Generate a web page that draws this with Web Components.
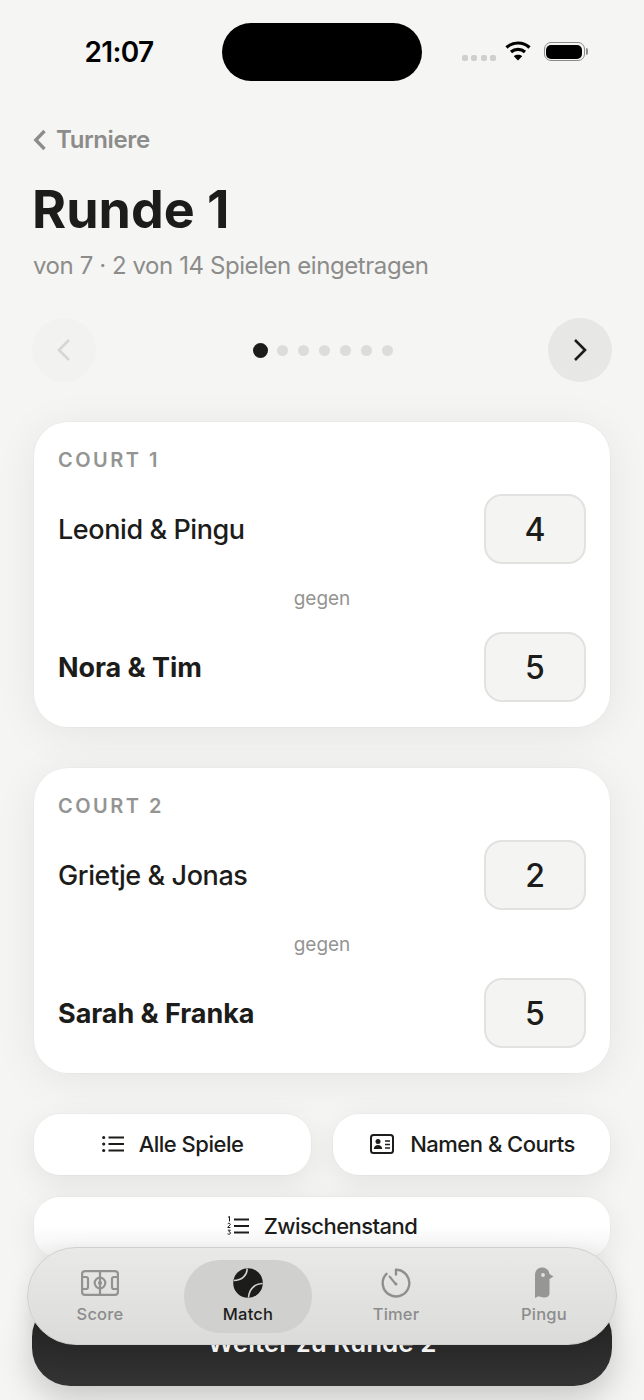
<!DOCTYPE html>
<html lang="de"><head><meta charset="utf-8"><title>Runde 1</title>
<style>
html,body{margin:0;padding:0;height:1400px;overflow:hidden;background:#f5f5f4}
body{font-family:Inter,"Liberation Sans",sans-serif;color:#1c1c1a;width:644px;position:relative}
</style></head><body>
<app-screen>
  <status-bar></status-bar>
  <page-head title="Runde 1" sub="von 7 · 2 von 14 Spielen eingetragen"></page-head>
  <round-nav total="7"></round-nav>
  <court-card label="COURT 1" a="Leonid &amp; Pingu" as="4" b="Nora &amp; Tim" bs="5"></court-card>
  <court-card second label="COURT 2" a="Grietje &amp; Jonas" as="2" b="Sarah &amp; Franka" bs="5"></court-card>
  <action-grid>
    <action-btn icon="list">Alle Spiele</action-btn>
    <action-btn icon="card" nudge>Namen &amp; Courts</action-btn>
    <action-btn icon="num" wide>Zwischenstand</action-btn>
  </action-grid>
  <primary-btn>Weiter zu Runde 2</primary-btn>
</app-screen>
<tab-bar>
  <tab-item icon="pitch">Score</tab-item>
  <tab-item icon="ball" active>Match</tab-item>
  <tab-item icon="timer">Timer</tab-item>
  <tab-item icon="bird">Pingu</tab-item>
</tab-bar>
<script>
const def=(name,html)=>customElements.define(name,class extends HTMLElement{
  connectedCallback(){ if(this.shadowRoot)return; const r=this.attachShadow({mode:'open'}); r.innerHTML=typeof html==='function'?html(this):html; }
});
const ICONS={
 list:`<svg width="22" height="18" viewBox="0 0 22 18" fill="none" stroke="#1c1c1a" stroke-width="2"><path d="M6.500 2.500H22M6.500 9H22M6.500 15.500H22"/><g fill="#1c1c1a" stroke="none"><circle cx="1.700" cy="2.500" r="1.600"/><circle cx="1.700" cy="9" r="1.600"/><circle cx="1.700" cy="15.500" r="1.600"/></g></svg>`,
 card:`<svg width="24" height="20" viewBox="0 0 24 20" fill="none"><rect x="1" y="1" width="22" height="18" rx="2.500" stroke="#1c1c1a" stroke-width="2"/><circle cx="8" cy="7.500" r="2.500" fill="#1c1c1a"/><path d="M3.800 15c.3-3 2-4 4.200-4s3.900 1 4.200 4z" fill="#1c1c1a"/><path d="M15 7h5M15 10.500h5M15 14h5" stroke="#1c1c1a" stroke-width="1.500"/></svg>`,
 num:`<svg width="22" height="20" viewBox="0 0 22 20" fill="none"><path d="M7 3.500H22M7 10H22M7 16.500H22" stroke="#1c1c1a" stroke-width="2"/><path d="M1 1.300 2.500.5V5.500M.7 7.800c.3-.8 2.600-.8 2.600.6 0 1-2.600 2.200-2.600 3.100H3.400M.8 14.200H3.300L1.900 15.800c1.300 0 1.700.6 1.600 1.400-.2 1.200-2.300 1.300-2.900.6" stroke="#1c1c1a" stroke-width="1"/></svg>`,
 pitch:`<svg width="38" height="26" viewBox="0 0 38 26" fill="none" stroke="#929292" stroke-width="2.200"><rect x="1.100" y="1.100" width="35.800" height="23.800" rx="3"/><path d="M19 1.100V24.900"/><circle cx="19" cy="13" r="5.300"/><circle cx="19" cy="13" r="1" fill="#929292"/><path d="M1.100 7H5a2 2 0 0 1 2 2v8a2 2 0 0 1-2 2H1.100M36.900 7H33a2 2 0 0 0-2 2v8a2 2 0 0 0 2 2h3.900"/></svg>`,
 ball:`<svg width="30" height="30" viewBox="0 0 30 30"><circle cx="15" cy="15" r="14.800" fill="#1c1c1a"/><path d="M14 .5C14.500 7 9 12.500 .8 12.500M29.500 15.500C22 15.500 16 21 15.500 29.500" fill="none" stroke="#d2d2d1" stroke-width="1.600"/></svg>`,
 timer:`<svg width="30" height="30" viewBox="0 0 30 30" fill="none" stroke="#8f8f8f" stroke-width="2.400" stroke-linecap="round"><path d="M15 1.800A13.300 13.300 0 1 1 5.500 5.800"/><path d="M15 2V6.500"/><path d="M8.500 8.500 14.300 15.500" stroke-width="2"/><circle cx="15" cy="16" r="1.500" fill="#8f8f8f" stroke="none"/></svg>`,
 bird:`<svg width="20" height="32" viewBox="0 0 20 32"><path d="M1 8C1 3.500 4 .5 8 .5S15 3 15.500 7L19.500 9.500 15.500 12V26C15.500 30 12 31 9 30.500 7 30 5 29.500 4.500 29.300L1 31Z" fill="#969696"/><circle cx="9" cy="8" r="1.900" fill="#e2e2e1"/></svg>`
};
def('app-screen',`<style>:host{display:flex;flex-direction:column;width:644px;height:1400px;overflow:hidden}</style><slot></slot>`);
def('status-bar',`<style>
:host{display:flex;align-items:center;height:58px;margin-top:23px;flex:none}
.t{width:222px;padding-left:16px;box-sizing:border-box;text-align:center;font:600 28px/1 Inter,sans-serif;color:#000;letter-spacing:-.7px}
.pill{width:200px;height:58px;border-radius:29px;background:#000}
.r{flex:1;display:flex;align-items:center;padding-left:40px;box-sizing:border-box}
.dots{display:flex;gap:3.300px;margin-top:12px}.dots i{width:6px;height:6px;border-radius:2px;background:#cfcfcf}
.wifi{margin-left:9px;margin-right:13px;margin-top:-3px}
.bat{display:flex;align-items:center;gap:1px;margin-top:-1px}
.b{width:36px;height:14px;padding:1.500px;border:1.500px solid #8b8b8b;border-radius:7px;box-sizing:content-box}
.b i{display:block;height:100%;background:#000;border-radius:5px}
.n{width:2px;height:7px;background:#8b8b8b;border-radius:0 2px 2px 0}
</style><div class="t">21:07</div><div class="pill"></div><div class="r"><div class="dots"><i></i><i></i><i></i><i></i></div>
<svg class="wifi" width="26" height="21" viewBox="0 0 26 21" fill="none" stroke="#000" stroke-width="3.200"><path d="M1.500 7.500C8 1.500 18 1.500 24.500 7.500"/><path d="M6 12C10 8.500 16 8.500 20 12"/><path d="M13 20.500 8.800 16.200C11 14.300 15 14.300 17.200 16.200Z" fill="#000" stroke="none"/></svg>
<div class="bat"><div class="b"><i></i></div><div class="n"></div></div></div>`);
def('page-head',h=>`<style>
:host{display:block;padding:44px 33px 0;flex:none}
.back{display:flex;align-items:center;gap:9px;font:600 24px/30px Inter,sans-serif;color:#8c8c8a;height:30px;letter-spacing:-.4px}
h1{margin:23px 0 0 -1px;font:700 52px/64px Inter,sans-serif;letter-spacing:0;color:#1c1c1a}
p{margin:9px 0 0;font:400 24px/30px Inter,sans-serif;color:#8c8c8a;letter-spacing:-.42px}
</style><div class="back"><svg width="14" height="22" viewBox="0 0 14 22" fill="none" stroke="#8c8c8a" stroke-width="3.300"><path d="M11.500 2 2.800 11 11.500 20"/></svg><span>Turniere</span></div><h1>${h.getAttribute('title')}</h1><p>${h.getAttribute('sub')}</p>`);
def('round-nav',h=>`<style>
:host{display:flex;align-items:center;justify-content:space-between;padding:0 32px;margin-top:37px;height:64px;flex:none}
.c{width:64px;height:64px;border-radius:50%;display:flex;align-items:center;justify-content:center}
.p{background:#f2f2f1}.n{background:#e7e7e6}
.d{display:flex;align-items:center;gap:10px;margin-left:1px}
.d i{width:11px;height:11px;border-radius:50%;background:#dcdcdb}
.d i:first-child{width:15px;height:15px;background:#1c1c1a;margin-right:-1px}
</style><div class="c p"><svg width="16" height="24" viewBox="0 0 16 24" fill="none" stroke="#d6d6d5" stroke-width="2.600"><path d="M13 2 3 12 13 22"/></svg></div>
<div class="d">${'<i></i>'.repeat(+h.getAttribute('total'))}</div>
<div class="c n"><svg width="16" height="24" viewBox="0 0 16 24" fill="none" stroke="#1c1c1a" stroke-width="2.600"><path d="M3 2 13 12 3 22"/></svg></div>`);
def('court-card',h=>{const g=a=>h.getAttribute(a);const wa=+g('as')>+g('bs'),wb=+g('bs')>+g('as');
return `<style>
:host{display:block;flex:none;margin:40px 34px 0;height:305px;box-sizing:border-box;padding:26px 24px 24px;background:#fff;border-radius:34px;box-shadow:0 0 0 1px rgba(0,0,0,.02),0 6px 44px rgba(0,0,0,.07)}
:host([second]){margin-top:41px}
.l{font:600 20px/24px Inter,sans-serif;letter-spacing:2.500px;color:#949492;height:24px}
.row{display:flex;align-items:center;justify-content:space-between;height:70px}
.row.a{margin-top:22px}
.n{font:500 27px/34px Inter,sans-serif;letter-spacing:-.42px;color:#1c1c1a;margin-top:2px}
.w{font-weight:700;letter-spacing:-.05px}
.s{width:102px;height:70px;box-sizing:border-box;border:2px solid #e2e2e1;border-radius:18px;background:#f4f4f3;display:flex;align-items:center;justify-content:center;padding-top:2px;font:500 32px/1 Inter,sans-serif;color:#1c1c1a}
.g{text-align:center;font:400 19px/24px Inter,sans-serif;color:#949492;height:68px;line-height:70px}
</style><div class="l">${g('label')}</div>
<div class="row a"><span class="n ${wa?'w':''}">${g('a')}</span><div class="s">${g('as')}</div></div>
<div class="g">gegen</div>
<div class="row"><span class="n ${wb?'w':''}">${g('b')}</span><div class="s">${g('bs')}</div></div>`});
def('action-grid',`<style>:host{display:grid;grid-template-columns:1fr 1fr;gap:22px;padding:0 34px;margin-top:41px;flex:none}</style><slot></slot>`);
def('action-btn',h=>`<style>
:host{display:flex;align-items:center;justify-content:center;gap:15px;height:61px;box-sizing:border-box;padding-bottom:2px;background:#fff;border-radius:26px;font:500 22px/1 Inter,sans-serif;letter-spacing:-.5px;color:#1c1c1a;box-shadow:0 0 0 1px rgba(0,0,0,.02),0 8px 32px rgba(0,0,0,.08)}
:host([wide]){grid-column:1/-1;background:linear-gradient(180deg,#fff 45%,#f1f1f1);padding-bottom:3px;letter-spacing:-.55px}
:host([nudge]){padding-left:2px;gap:16px}
svg{display:block}
</style>${ICONS[h.getAttribute('icon')]}<span><slot></slot></span>`);
def('primary-btn',`<style>
:host{display:flex;align-items:center;justify-content:center;margin:41px 32px 0;height:87px;flex:none;background:linear-gradient(180deg,#222,#333);border-radius:38px;color:#fff;font:600 26px/1 Inter,sans-serif;letter-spacing:0;box-shadow:0 12px 34px rgba(0,0,0,.2)}
</style><slot></slot>`);
def('tab-bar',`<style>
:host{position:absolute;left:27px;top:1247px;width:590px;height:98px;box-sizing:border-box;border:1.500px solid #cfcfce;border-radius:49px;background:linear-gradient(180deg,#e9e9e8,#dbdbda);display:grid;grid-template-columns:repeat(4,148px);justify-content:center;align-items:center;box-shadow:0 6px 22px rgba(0,0,0,.1);justify-items:center}
</style><slot></slot>`);
def('tab-item',h=>`<style>
:host{display:flex;flex-direction:column;align-items:center;justify-content:flex-start;width:128px;height:73px;box-sizing:border-box;padding-top:7px;border-radius:36px;font:500 16.500px/20px Inter,sans-serif;color:#8c8c8c;letter-spacing:.2px}
:host([active]){background:#d0d0cf;color:#1c1c1a}
.i{height:32px;display:flex;align-items:center;justify-content:center;margin-bottom:5px}
svg{display:block}
</style><div class="i">${ICONS[h.getAttribute('icon')]}</div><slot></slot>`);
</script>
</body></html>
